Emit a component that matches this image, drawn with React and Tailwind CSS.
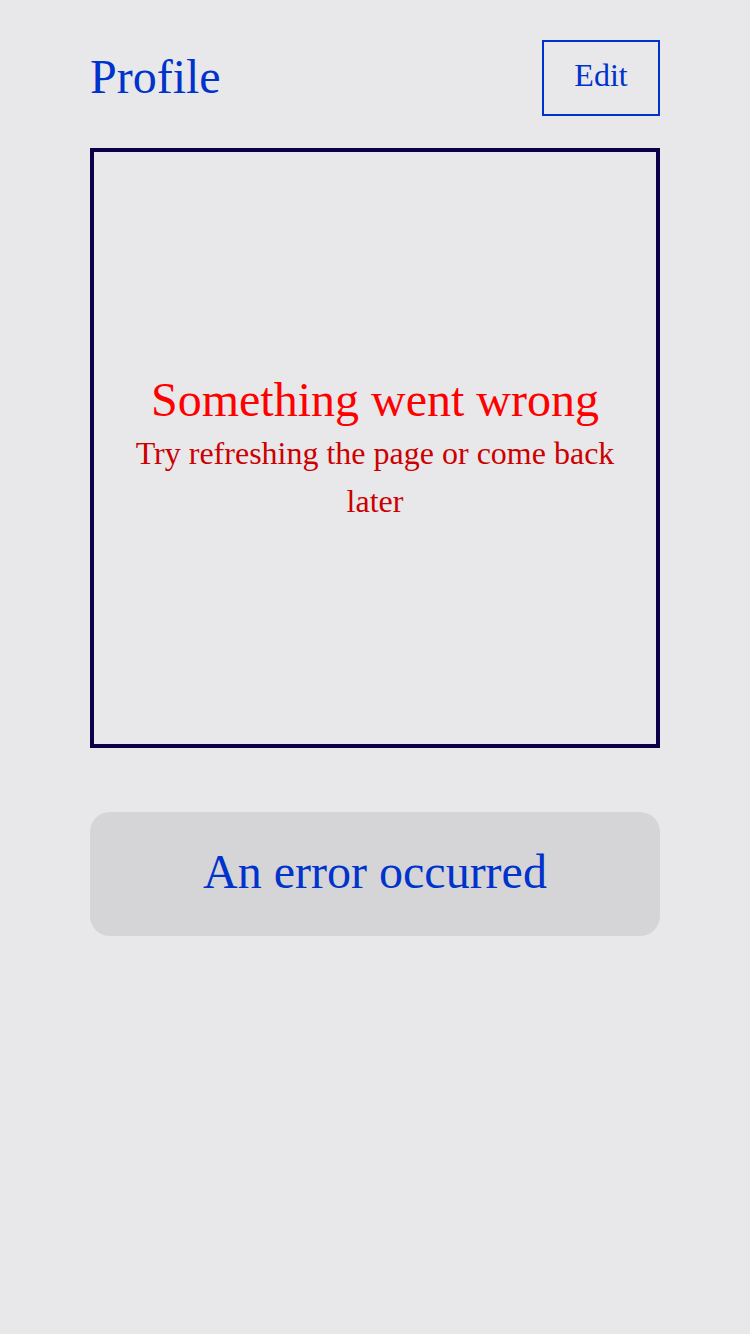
import React from 'react';

export default function App() {
  return (
    <div className="min-h-[1334px] bg-[#e8e8ea] px-[90px] pt-[40px]" style={{ fontFamily: '"Liberation Serif", "Times New Roman", serif' }}>
      {/* Header */}
      <div className="flex items-center justify-between h-[76px]">
        <h1 className="text-[48px] leading-none text-[#0033cc] mb-[2px]">Profile</h1>
        <button className="w-[118px] h-[76px] border-2 border-[#0033cc] text-[32px] text-[#0033cc] flex items-center justify-center pb-[6px]">
          Edit
        </button>
      </div>

      {/* Error box */}
      <div className="mt-[32px] h-[600px] border-4 border-[#0a0048] flex flex-col items-center justify-center text-center px-8">
        <p className="text-[48px] leading-[55px] text-[#ff0000] mb-[2px]">Something went wrong</p>
        <p className="text-[32px] leading-[48px] text-[#cc0000]">Try refreshing the page or come back later</p>
      </div>

      {/* Bottom */}
      <div className="mt-[64px] h-[124px] rounded-[20px] bg-[#d5d5d7] flex items-center justify-center pb-[4px]">
        <span className="text-[48px] text-[#0033cc]">An error occurred</span>
      </div>
    </div>
  );
}
